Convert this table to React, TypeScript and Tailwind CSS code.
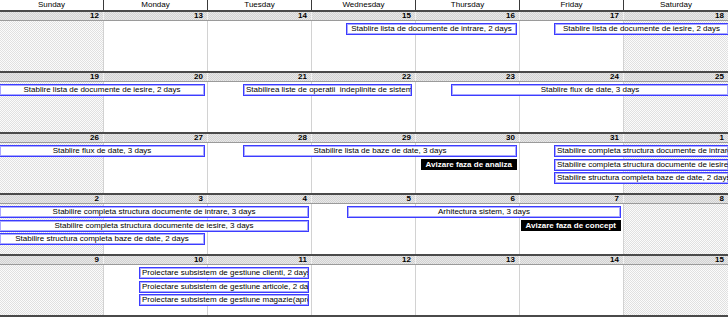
import React from 'react';

const DAYS = ['Sunday', 'Monday', 'Tuesday', 'Wednesday', 'Thursday', 'Friday', 'Saturday'];

type Bar = {
  pos: string;
  row: number;
  text: string;
  left?: boolean;
  openL?: boolean;
  openR?: boolean;
};

type Milestone = { pos: string; row: number; text: string };

type Week = { dates: number[]; bars: Bar[]; milestones: Milestone[] };

const ROWS = ['top-[2px]', 'top-[16px]', 'top-[29px]'];

const WEEKS: Week[] = [
  {
    dates: [12, 13, 14, 15, 16, 17, 18],
    bars: [
      { pos: 'left-[346px] w-[171px]', row: 0, text: 'Stablire lista de documente de intrare, 2 days' },
      { pos: 'left-[554px] w-[174px]', row: 0, text: 'Stablire lista de documente de iesire, 2 days', openR: true },
    ],
    milestones: [],
  },
  {
    dates: [19, 20, 21, 22, 23, 24, 25],
    bars: [
      { pos: 'left-[0px] w-[205px]', row: 0, text: 'Stablire lista de documente de iesire, 2 days', openL: true },
      { pos: 'left-[243px] w-[169px]', row: 0, text: 'Stabilirea liste de operatii  indeplinite de sistem, 2 days', left: true },
      { pos: 'left-[451px] w-[277px]', row: 0, text: 'Stablire flux de date, 3 days', openR: true },
    ],
    milestones: [],
  },
  {
    dates: [26, 27, 28, 29, 30, 31, 1],
    bars: [
      { pos: 'left-[0px] w-[205px]', row: 0, text: 'Stablire flux de date, 3 days', openL: true },
      { pos: 'left-[243px] w-[274px]', row: 0, text: 'Stabilire lista de baze de date, 3 days' },
      { pos: 'left-[554px] w-[174px]', row: 0, text: 'Stabilire completa structura documente de intrare, 3 days', left: true, openR: true },
      { pos: 'left-[554px] w-[174px]', row: 1, text: 'Stabilire completa structura documente de iesire, 3 days', left: true, openR: true },
      { pos: 'left-[554px] w-[174px]', row: 2, text: 'Stabilire structura completa baze de date, 2 days', left: true, openR: true },
    ],
    milestones: [{ pos: 'right-[211px]', row: 1, text: 'Avizare faza de analiza' }],
  },
  {
    dates: [2, 3, 4, 5, 6, 7, 8],
    bars: [
      { pos: 'left-[0px] w-[309px]', row: 0, text: 'Stabilire completa structura documente de intrare, 3 days', openL: true },
      { pos: 'left-[0px] w-[309px]', row: 1, text: 'Stabilire completa structura documente de iesire, 3 days', openL: true },
      { pos: 'left-[0px] w-[205px]', row: 2, text: 'Stabilire structura completa baze de date, 2 days', openL: true },
      { pos: 'left-[347px] w-[274px]', row: 0, text: 'Arhitectura sistem, 3 days' },
    ],
    milestones: [{ pos: 'right-[107px]', row: 1, text: 'Avizare faza de concept' }],
  },
  {
    dates: [9, 10, 11, 12, 13, 14, 15],
    bars: [
      { pos: 'left-[139px] w-[170px]', row: 0, text: 'Proiectare subsistem de gestiune clienti, 2 days', left: true },
      { pos: 'left-[139px] w-[170px]', row: 1, text: 'Proiectare subsistem de gestiune articole, 2 days', left: true },
      { pos: 'left-[139px] w-[170px]', row: 2, text: 'Proiectare subsistem de gestiune magazie(aprovizionare), 2 days', left: true },
    ],
    milestones: [],
  },
];

// dithered fills, like the old Project calendar view
const dither = 'bg-[repeating-conic-gradient(#d2d2d2_0_25%,#e8e8e8_0_50%)] bg-size-[2px_2px]';
const weekend = 'bg-[repeating-conic-gradient(#e0e0e0_0_25%,#fbfbfb_0_50%)] bg-size-[2px_2px]';

const WeekRow = ({ week }: { week: Week }) => (
  <div className="border-t-2 border-[#4a4a4a]">
    {/* date band */}
    <div className={`grid grid-cols-7 h-[9px] border-b border-[#9a9a9a] ${dither}`}>
      {week.dates.map((d, i) => (
        <div
          key={i}
          className="border-r border-[#f2f2f2] last:border-r-0 text-right pr-[4px] text-[8px] leading-[8px] font-bold text-black"
        >
          {d}
        </div>
      ))}
    </div>
    {/* body */}
    <div className="relative h-[50px]">
      <div className="grid grid-cols-7 h-full">
        {DAYS.map((d, i) => (
          <div
            key={d}
            className={`border-r border-[#d2d2d2] last:border-r-0 ${i === 0 || i === 6 ? weekend : 'bg-white'}`}
          />
        ))}
      </div>
      {week.bars.map((b, i) => (
        <div
          key={i}
          className={`absolute ${b.pos} ${ROWS[b.row]} h-[12px] bg-white border-y border-[#3c3cff] ${b.openL ? '' : 'border-l'} ${b.openR ? '' : 'border-r'} shadow-[inset_0_0_0_1px_#a9a9ff] overflow-hidden flex items-center ${b.left ? 'justify-start pl-[2px]' : 'justify-center'}`}
        >
          <span className="whitespace-pre text-[8px] leading-[10px] text-black">{b.text}</span>
        </div>
      ))}
      {week.milestones.map((m, i) => (
        <div
          key={i}
          className={`absolute ${m.pos} ${ROWS[m.row]} h-[11px] bg-black px-[5px] flex items-center`}
        >
          <span className="whitespace-nowrap text-[8px] leading-[10px] font-bold text-white">{m.text}</span>
        </div>
      ))}
    </div>
  </div>
);

export default function App() {
  return (
    <div className="w-[728px] h-[318px] overflow-hidden bg-white font-['Liberation_Sans',Arial,sans-serif]">
      <div className="grid grid-cols-7 h-[10px] bg-white">
        {DAYS.map((d) => (
          <div
            key={d}
            className="border-r border-[#3a3a3a] last:border-r-0 text-center text-[8px] leading-[9px] text-black"
          >
            {d}
          </div>
        ))}
      </div>
      {WEEKS.map((w, i) => (
        <WeekRow key={i} week={w} />
      ))}
      <div className="border-t-2 border-[#4a4a4a]" />
    </div>
  );
}
